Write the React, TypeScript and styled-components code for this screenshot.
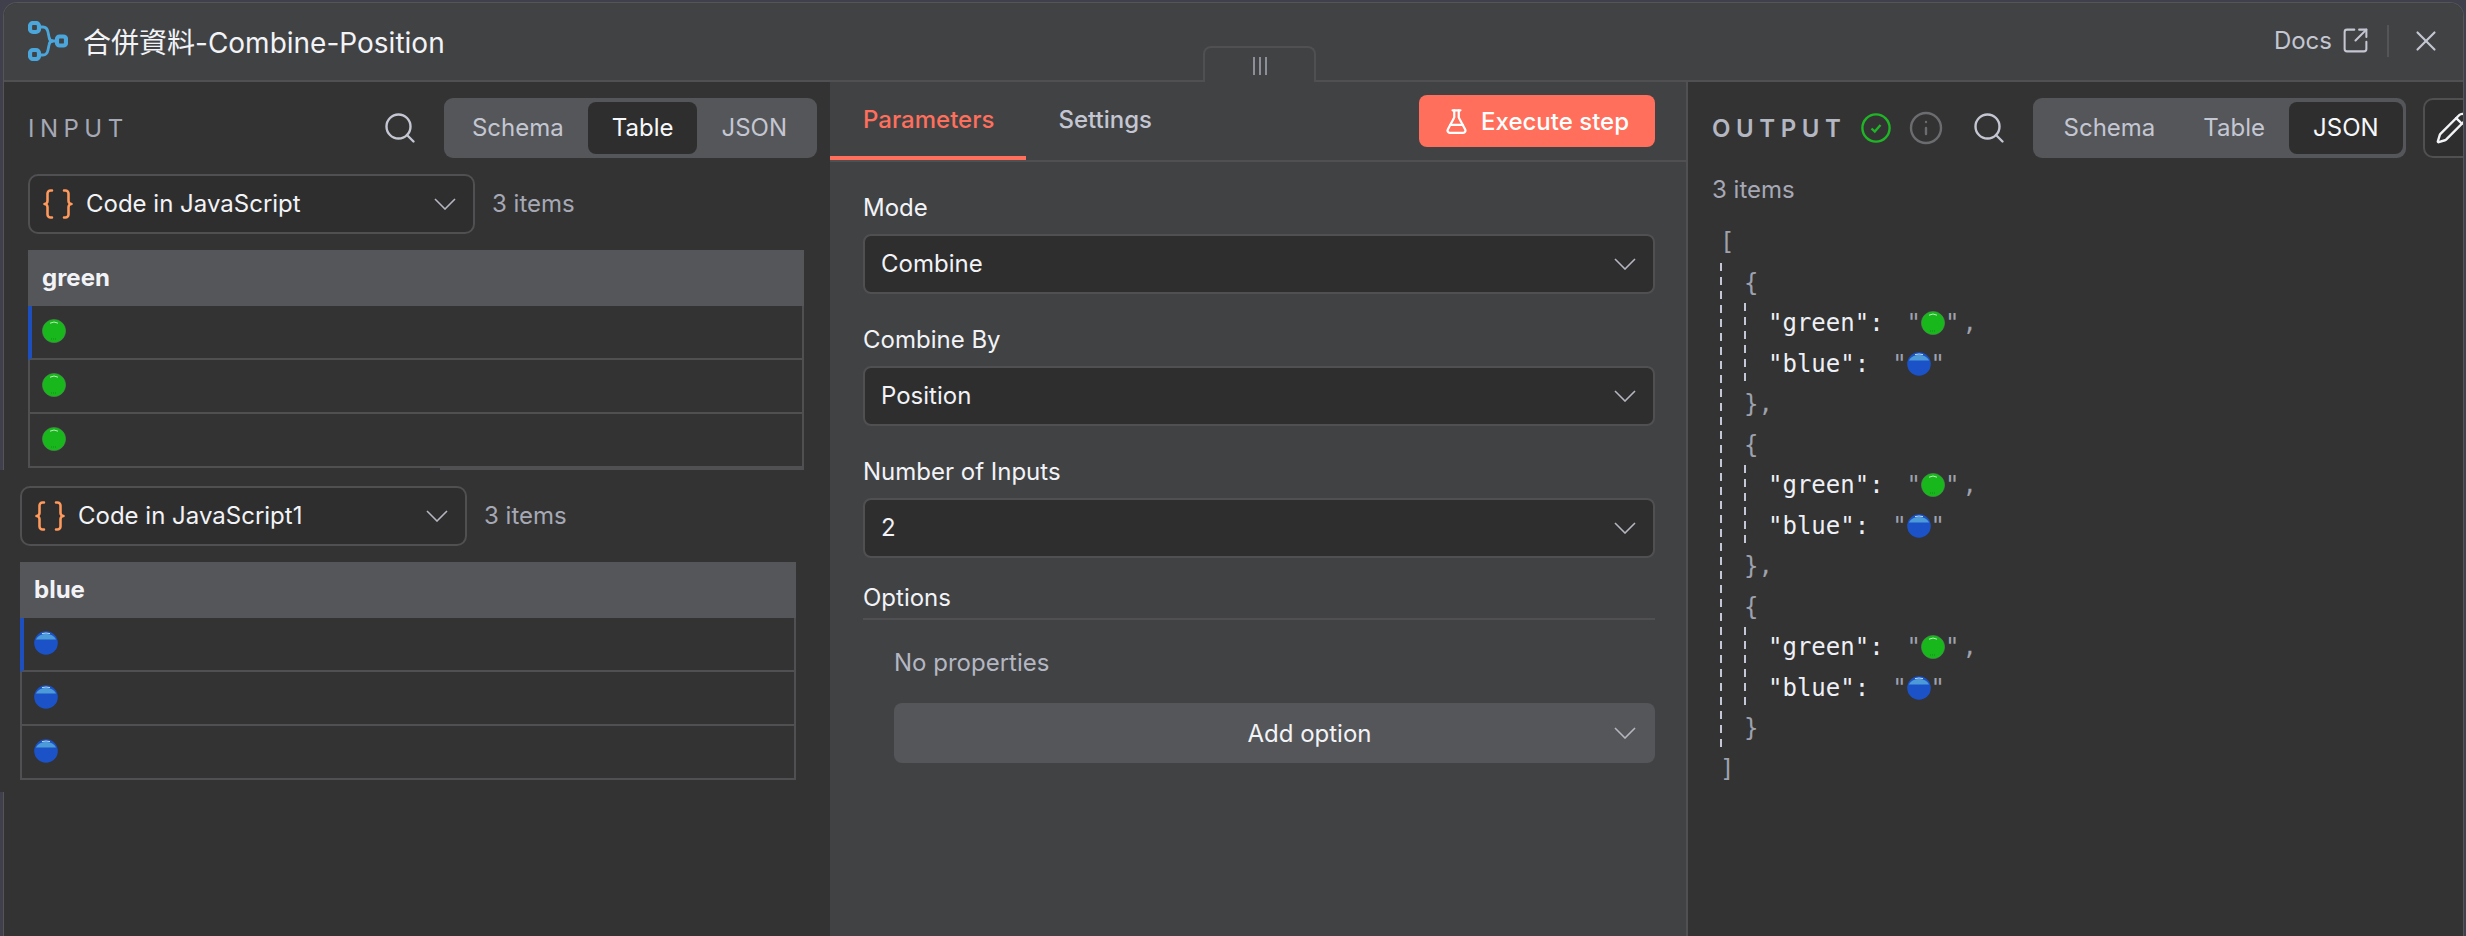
import styled, { createGlobalStyle } from "styled-components";
import { Braces, FlaskConical, Info, Pencil, Search, SquareArrowOutUpRight, X } from "lucide-react";

const GlobalStyle = createGlobalStyle`
  html, body {
    margin: 0;
    padding: 0;
    background: #333333;
  }
  * {
    box-sizing: border-box;
  }
`;

const Chevron = () => (
  <ChevronSvg viewBox="0 0 22 12">
    <polyline points="1,1 11,11 21,1" fill="none" stroke="#b4b6c0" strokeWidth="1.6" />
  </ChevronSvg>
);

const Ball = ({ color }: { color: "green" | "blue" }) =>
  color === "green" ? (
    <BallSvg viewBox="0 0 24 24">
      <circle cx="12" cy="12" r="11.6" fill="#18b81d" />
      <circle cx="12" cy="12" r="11.6" fill="none" stroke="#4d8a50" strokeWidth="0.6" />
      <path d="M8 4.2 Q12 1.8 16 4.2" fill="none" stroke="#b9eeb8" strokeWidth="1" />
      <path d="M9 20 h6" stroke="#0f8f14" strokeWidth="1" strokeDasharray="1 1" />
    </BallSvg>
  ) : (
    <BallSvg viewBox="0 0 24 24">
      <circle cx="12" cy="12" r="11.8" fill="#1b52c8" />
      <path d="M1.8 8.5 A11.8 11.8 0 0 1 22.2 8.5 Z" fill="#4d9ad8" />
      <path d="M8 2.6 Q12 1.4 16 2.6" fill="none" stroke="#b5dcf4" strokeWidth="1" />
    </BallSvg>
  );

const sources = [
  { name: "Code in JavaScript", column: "green", color: "green" as const, indent: 8 },
  { name: "Code in JavaScript1", column: "blue", color: "blue" as const, indent: 0 },
];

const fields = [
  { label: "Mode", value: "Combine" },
  { label: "Combine By", value: "Position" },
  { label: "Number of Inputs", value: "2" },
];

const JsonItem = ({ last }: { last?: boolean }) => (
  <>
    <JsonLine><Punct>{"{"}</Punct></JsonLine>
    <Guide>
      <JsonLine>
        <Key>"green":</Key>
        <Value>
          <Punct>"</Punct><Ball color="green" /><Punct>"</Punct>
        </Value>
        <Comma>,</Comma>
      </JsonLine>
      <JsonLine>
        <Key>"blue":</Key>
        <Value>
          <Punct>"</Punct><Ball color="blue" /><Punct>"</Punct>
        </Value>
      </JsonLine>
    </Guide>
    <JsonLine><Punct>{last ? "}" : "},"}</Punct></JsonLine>
  </>
);

const App = () => {
  return (
    <Page>
      <GlobalStyle />
      <Modal>
        <Header>
          <NodeIcon viewBox="0 0 40 40">
            <g fill="none" stroke="#4ba6dc">
              <rect x="2" y="2" width="9" height="9" rx="3" strokeWidth="4.2" />
              <rect x="2" y="29" width="9" height="9" rx="3" strokeWidth="4.2" />
              <rect x="29" y="15.5" width="9" height="9" rx="2.5" strokeWidth="4.2" />
              <path d="M11 6 H15 Q19 6 20 11 L21 16 Q21.5 20 25 20 H29" strokeWidth="2.8" />
              <path d="M11 34 H15 Q19 34 20 29 L21 24 Q21.5 20 25 20" strokeWidth="2.8" />
            </g>
          </NodeIcon>
          <Title>合併資料-Combine-Position</Title>
          <DocsLink>
            Docs
            <SquareArrowOutUpRight size={29} strokeWidth={1.7} />
          </DocsLink>
          <HeaderDivider />
          <CloseIcon>
            <X size={34} strokeWidth={1.5} />
          </CloseIcon>
        </Header>
        <DragHandle>
          <svg width="16" height="18" viewBox="0 0 16 18">
            <path d="M2 0 V18 M8 0 V18 M14 0 V18" stroke="#8d8f98" strokeWidth="2" />
          </svg>
        </DragHandle>
        <Body>
          <InputPanel>
            <PanelBar>
              <InputLabel>INPUT</InputLabel>
              <SearchButton $auto>
                <Search size={36} strokeWidth={1.6} />
              </SearchButton>
              <Tabs>
                <Tab>Schema</Tab>
                <Tab $active>Table</Tab>
                <Tab>JSON</Tab>
              </Tabs>
            </PanelBar>
            {sources.map((source, i) => (
              <Source key={source.name} $indent={source.indent} $first={i === 0}>
                <SourceRow>
                  <SourceSelect>
                    <Braces size={36} strokeWidth={1.7} color="#ff9a5c" />
                    <SourceName>{source.name}</SourceName>
                    <Chevron />
                  </SourceSelect>
                  <Count>3 items</Count>
                </SourceRow>
                <DataTable $sliver={i === 0}>
                  <TableHead>{source.column}</TableHead>
                  {[0, 1, 2].map((row) => (
                    <TableRow key={row} $marked={row === 0}>
                      <Ball color={source.color} />
                    </TableRow>
                  ))}
                </DataTable>
              </Source>
            ))}
          </InputPanel>

          <ParamsPanel>
            <ParamsBar>
              <ParamTab $active>Parameters</ParamTab>
              <ParamTab>Settings</ParamTab>
              <ExecuteButton>
                <FlaskConical size={27} strokeWidth={2} />
                Execute step
              </ExecuteButton>
            </ParamsBar>
            <Form>
              {fields.map((field) => (
                <Field key={field.label}>
                  <FieldLabel>{field.label}</FieldLabel>
                  <FieldSelect>
                    {field.value}
                    <Chevron />
                  </FieldSelect>
                </Field>
              ))}
              <OptionsTitle>Options</OptionsTitle>
              <OptionsBody>
                <NoProps>No properties</NoProps>
                <AddOption>
                  <span>Add option</span>
                  <AddChevron>
                    <Chevron />
                  </AddChevron>
                </AddOption>
              </OptionsBody>
            </Form>
          </ParamsPanel>

          <OutputPanel>
            <PanelBar>
              <OutputLabel>OUTPUT</OutputLabel>
              <StatusIcon viewBox="0 0 30 30" $gap={14}>
                <circle cx="15" cy="15" r="13.6" fill="none" stroke="#1fb526" strokeWidth="2.4" />
                <path d="M10.5 15.5 L13.8 18.6 L19.5 12" fill="none" stroke="#1fb526" strokeWidth="2.4" />
              </StatusIcon>
              <InfoWrap>
                <Info size={36} strokeWidth={1.6} color="#6b6c70" />
              </InfoWrap>
              <SearchButton>
                <Search size={36} strokeWidth={1.6} />
              </SearchButton>
              <Tabs $endFlush>
                <Tab>Schema</Tab>
                <Tab>Table</Tab>
                <Tab $active>JSON</Tab>
              </Tabs>
              <EditButton>
                <Pencil size={34} strokeWidth={1.7} />
              </EditButton>
            </PanelBar>
            <OutputCount>3 items</OutputCount>
            <Json>
              <JsonLine><Punct>[</Punct></JsonLine>
              <Guide>
                <JsonItem />
                <JsonItem />
                <JsonItem last />
              </Guide>
              <JsonLine><Punct>]</Punct></JsonLine>
            </Json>
          </OutputPanel>
        </Body>
      </Modal>
      <FrameGap />
    </Page>
  );
};

export default App;

// Estilos
const Page = styled.div`
  position: relative;
  width: 2466px;
  height: 936px;
  overflow: hidden;
  padding: 2px 2px 0 3px;
  background: #40404c;
  font-family: Inter, "Noto Sans CJK TC", sans-serif;
  font-size: 24px;
  color: #f2f3f7;
`;

const Modal = styled.div`
  position: relative;
  display: flex;
  flex-direction: column;
  height: 100%;
  overflow: hidden;
  border: 1px solid #555558;
  border-bottom: none;
  border-radius: 14px 14px 0 0;
  background: #333333;
`;

const FrameGap = styled.div`
  position: absolute;
  left: 0;
  top: 470px;
  width: 5px;
  height: 322px;
  background: #333333;
`;

const Header = styled.header`
  display: flex;
  align-items: center;
  flex-shrink: 0;
  height: 79px;
  padding: 0 29px 2px 24px;
  background: #414244;
  border-bottom: 2px solid #505052;
`;

const NodeIcon = styled.svg`
  width: 40px;
  height: 40px;
`;

const Title = styled.div`
  margin-left: 15px;
  font-size: 28px;
  color: #f2f3f7;
`;

const DocsLink = styled.div`
  display: flex;
  align-items: center;
  gap: 9px;
  margin-left: auto;
  color: #c4c7d2;
`;

const HeaderDivider = styled.div`
  width: 2px;
  height: 32px;
  margin: 0 20px 0 17px;
  background: #555558;
`;

const CloseIcon = styled.div`
  display: flex;
  margin: 0 -9px 0 0;
  color: #c4c7d2;
`;

const DragHandle = styled.div`
  position: absolute;
  left: 1199px;
  top: 43px;
  display: flex;
  align-items: center;
  justify-content: center;
  width: 113px;
  height: 36px;
  padding-top: 2px;
  background: #414244;
  border: 2px solid #505052;
  border-bottom: none;
  border-radius: 8px 8px 0 0;
`;

const Body = styled.div`
  display: flex;
  flex: 1;
  min-height: 0;
`;

const InputPanel = styled.section`
  flex: 0 0 826px;
  padding: 16px 13px 0 16px;
  background: #333333;
`;

const PanelBar = styled.div`
  display: flex;
  align-items: center;
  height: 60px;
`;

const InputLabel = styled.div`
  margin-left: 8px;
  color: #a6a9b5;
  letter-spacing: 5.5px;
`;

const OutputLabel = styled.div`
  font-weight: 600;
  color: #b4b7c2;
  letter-spacing: 5.6px;
`;

const SearchButton = styled.div<{ $auto?: boolean }>`
  display: flex;
  margin-left: ${(p) => (p.$auto ? "auto" : "27px")};
  margin-right: 26px;
  color: #c4c7d2;
`;

const Tabs = styled.div<{ $endFlush?: boolean }>`
  display: flex;
  flex-shrink: 0;
  height: 60px;
  padding: ${(p) => (p.$endFlush ? "4px 3px 4px 7px" : "4px 6px 4px 4px")};
  background: #55565a;
  border-radius: 9px;
`;

const Tab = styled.div<{ $active?: boolean }>`
  display: flex;
  align-items: center;
  padding: 0 24px 1px;
  border-radius: 8px;
  background: ${(p) => (p.$active ? "#2e2e2e" : "transparent")};
  color: ${(p) => (p.$active ? "#f7f8fb" : "#c4c7d2")};
`;

const Source = styled.div<{ $indent: number; $first: boolean }>`
  margin-top: ${(p) => (p.$first ? "16px" : "18px")};
  margin-left: ${(p) => p.$indent}px;
`;

const SourceRow = styled.div`
  display: flex;
  align-items: center;
  gap: 17px;
`;

const SourceSelect = styled.div`
  display: flex;
  align-items: center;
  width: 447px;
  height: 60px;
  padding: 0 17px 1px 10px;
  background: #2e2e2e;
  border: 2px solid #505052;
  border-radius: 10px;
`;

const SourceName = styled.span`
  flex: 1;
  margin-left: 10px;
`;

const Count = styled.span`
  padding-bottom: 1px;
  color: #a6a9b5;
`;

const DataTable = styled.div<{ $sliver: boolean }>`
  position: relative;
  width: 776px;
  margin-top: 16px;

  &::after {
    content: "";
    display: ${(p) => (p.$sliver ? "block" : "none")};
    position: absolute;
    left: 412px;
    right: 0;
    bottom: -2px;
    height: 2px;
    background: #505052;
  }
`;

const TableHead = styled.div`
  display: flex;
  align-items: center;
  height: 56px;
  padding: 0 0 1px 14px;
  background: #555659;
  font-weight: 700;
  color: #f2f3f7;
`;

const TableRow = styled.div<{ $marked: boolean }>`
  display: flex;
  align-items: center;
  height: 54px;
  padding-left: ${(p) => (p.$marked ? "10px" : "12px")};
  padding-bottom: 2px;
  background: #333333;
  border: 2px solid #505052;
  border-top: none;
  border-left: ${(p) => (p.$marked ? "4px solid #1d4fbf" : "2px solid #505052")};
`;

const ParamsPanel = styled.section`
  flex: 0 0 858px;
  background: #414244;
  border-right: 2px solid #505052;
`;

const ParamsBar = styled.div`
  display: flex;
  align-items: center;
  height: 80px;
  padding-right: 31px;
  border-bottom: 2px solid #505052;
`;

const ParamTab = styled.div<{ $active?: boolean }>`
  display: flex;
  align-items: center;
  height: 78px;
  padding: 0 32px;
  padding-left: ${(p) => (p.$active ? "33px" : "32px")};
  border-bottom: 4px solid ${(p) => (p.$active ? "#ff6f5c" : "transparent")};
  font-weight: 500;
  color: ${(p) => (p.$active ? "#ff6f5c" : "#c4c7d2")};
`;

const ExecuteButton = styled.div`
  display: flex;
  align-items: center;
  gap: 11px;
  height: 52px;
  margin-left: auto;
  padding: 0 26px 0 24px;
  background: #ff6f5c;
  border-radius: 8px;
  font-weight: 500;
  color: #ffffff;
`;

const Form = styled.div`
  padding: 32px 31px 0 33px;
`;

const Field = styled.div`
  margin-bottom: 32px;
`;

const FieldLabel = styled.div`
  height: 28px;
  margin-bottom: 12px;
  line-height: 28px;
`;

const FieldSelect = styled.div`
  display: flex;
  align-items: center;
  justify-content: space-between;
  height: 60px;
  padding: 0 17px 1px 16px;
  background: #2e2e2e;
  border: 2px solid #505052;
  border-radius: 8px;
`;

const ChevronSvg = styled.svg`
  width: 22px;
  height: 12px;
  flex-shrink: 0;
`;

const OptionsTitle = styled.div`
  height: 36px;
  margin-top: -6px;
  padding-bottom: 6px;
  line-height: 28px;
  border-bottom: 2px solid #505052;
`;

const OptionsBody = styled.div`
  padding: 27px 0 0 31px;
`;

const NoProps = styled.div`
  height: 32px;
  line-height: 32px;
  color: #b4b7c2;
`;

const AddOption = styled.div`
  position: relative;
  display: flex;
  align-items: center;
  justify-content: center;
  height: 60px;
  margin-top: 24px;
  padding-left: 70px;
  background: #555659;
  border-radius: 8px;
`;

const AddChevron = styled.span`
  position: absolute;
  right: 19px;
  display: flex;
`;

const OutputPanel = styled.section`
  flex: 1;
  min-width: 0;
  padding: 16px 0 0 24px;
  background: #333333;
`;

const StatusIcon = styled.svg<{ $gap: number }>`
  flex-shrink: 0;
  width: 30px;
  height: 30px;
  margin-left: ${(p) => p.$gap}px;
`;

const InfoWrap = styled.div`
  display: flex;
  margin-left: 17px;
`;

const EditButton = styled.div`
  display: flex;
  align-items: center;
  flex-shrink: 0;
  width: 62px;
  height: 60px;
  margin-left: 17px;
  padding-left: 10px;
  background: #2e2e2e;
  border: 2px solid #505052;
  border-radius: 10px;
  color: #f2f3f7;
`;

const OutputCount = styled.div`
  height: 30px;
  margin-top: 17px;
  line-height: 30px;
  color: #a6a9b5;
`;

const Json = styled.div`
  margin: 17px 0 0 8px;
  font-family: "DejaVu Sans Mono", monospace;
  font-size: 24px;
`;

const JsonLine = styled.div`
  display: flex;
  align-items: center;
  height: 40.5px;
  white-space: pre;
`;

const Guide = styled.div`
  padding-left: 24px;
  background: repeating-linear-gradient(to bottom, #c4c8d6 0 8px, transparent 8px 14px) left top / 2px 100% no-repeat;
`;

const Punct = styled.span`
  display: inline-flex;
  color: #9ea1ae;
`;

const Key = styled.span`
  color: #eef0f6;
`;

const Value = styled.span`
  display: inline-flex;
  align-items: center;
  margin-left: 23px;
`;

const Comma = styled.span`
  margin-left: 3px;
  color: #9ea1ae;
`;

const BallSvg = styled.svg`
  flex-shrink: 0;
  width: 24px;
  height: 24px;
`;
